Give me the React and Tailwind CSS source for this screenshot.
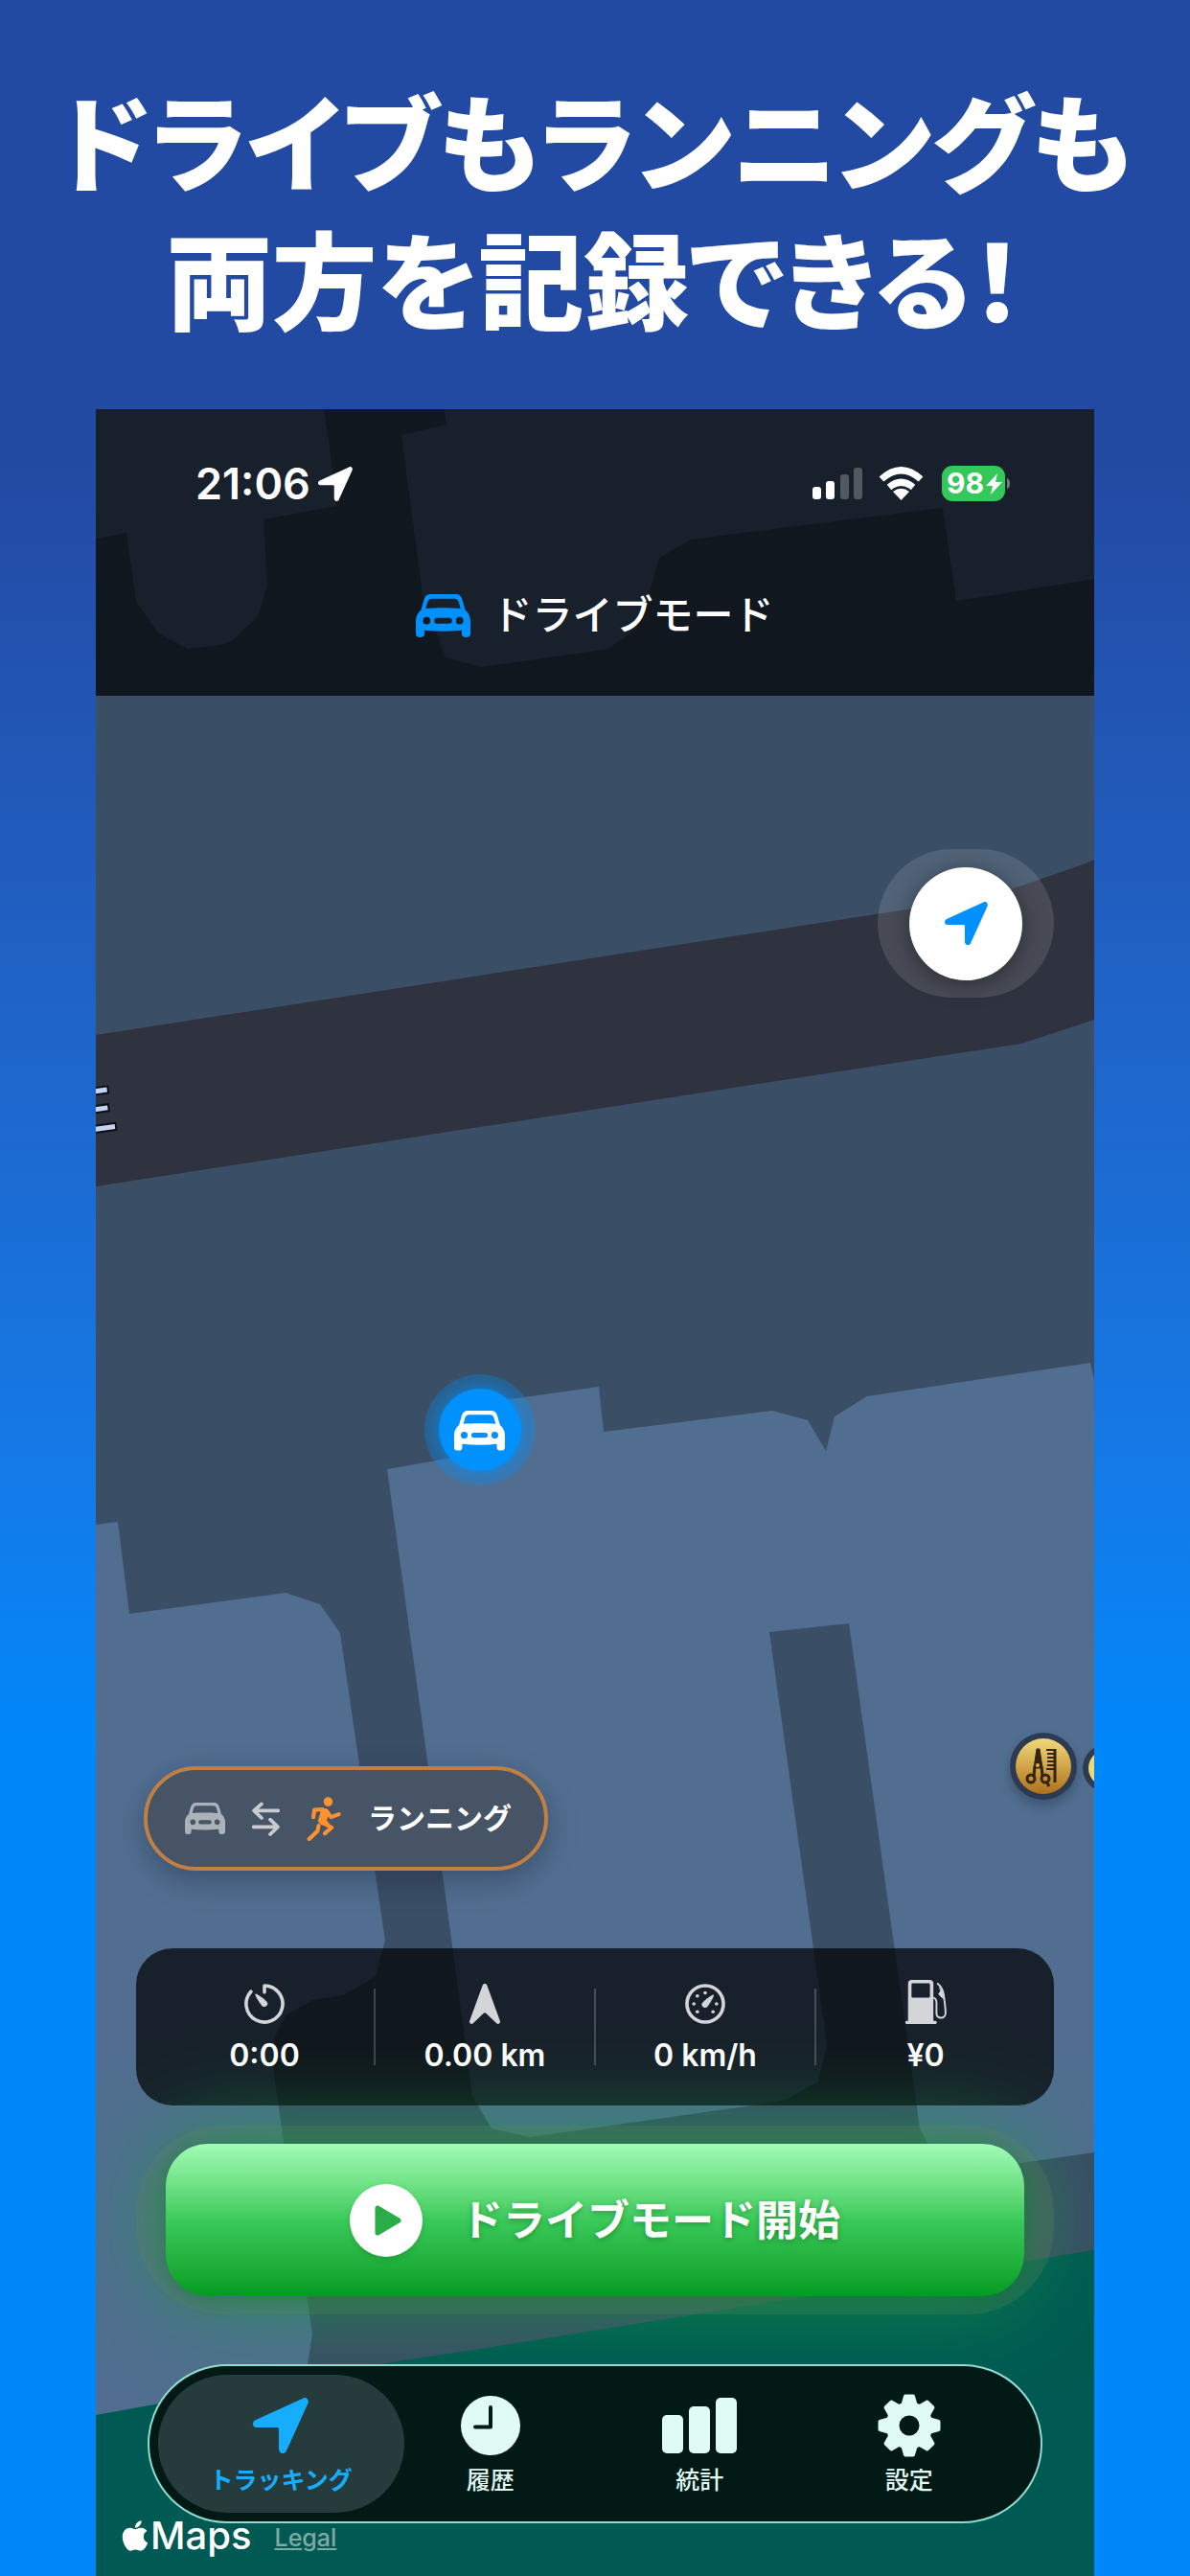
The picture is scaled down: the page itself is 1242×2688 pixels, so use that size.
import { useState } from "react";
import { FaApple } from "react-icons/fa";

const CAR_PATH =
  "M36 0H90C100 0 104 4 107 12L114 36C121 42 126 50 126 60V91C126 96 123 99 118 99H114C109 99 106 96 106 91V83C78 86 48 86 20 83V91C20 96 17 99 12 99H8C3 99 0 96 0 91V60C0 50 5 42 12 36L19 12C22 4 26 0 36 0ZM38 10C32 10 29 12 27 18L23 33C48 31 78 31 103 33L99 18C97 12 94 10 88 10ZM25 52.5A8.5 8.5 0 1 0 25 69.5A8.5 8.5 0 1 0 25 52.5ZM101 52.5A8.5 8.5 0 1 0 101 69.5A8.5 8.5 0 1 0 101 52.5ZM49 54.5A6.5 6.5 0 0 0 49 67.5H77A6.5 6.5 0 0 0 77 54.5Z";

function CarIcon({ className }) {
  return (
    <svg viewBox="0 0 126 99" className={className} fill="currentColor" aria-hidden="true">
      <path fillRule="evenodd" d={CAR_PATH} />
    </svg>
  );
}

function LocationIcon({ className }) {
  return (
    <svg viewBox="0 0 174 174" className={className} fill="currentColor" aria-hidden="true">
      <path d="M156 2L8 70C-4 76-2 93 11 93H76Q81 93 81 98V160C81 175 99 180 105 166L172 18C177 7 167-4 156 2Z" />
    </svg>
  );
}

function TimerIcon({ className }) {
  return (
    <svg viewBox="0 0 128 128" className={className} fill="none" stroke="currentColor" strokeWidth="11" strokeLinecap="round" aria-hidden="true">
      <path strokeLinejoin="round" d="M64 27V6A58 58 0 1 1 21 25" />
      <path fill="currentColor" stroke="none" d="M35 32C32 36 48 60 55 69C62 77 76 72 74 61C72 54 39 29 35 32Z" />
    </svg>
  );
}

function NorthIcon({ className }) {
  return (
    <svg viewBox="0 0 99 129" className={className} fill="currentColor" aria-hidden="true">
      <path d="M42 6C45-2 54-2 57 6L98 118C101 126 93 132 87 127L54 95Q49.500 91 45 95L12 127C6 132-2 126 1 118Z" />
    </svg>
  );
}

function SpeedIcon({ className }) {
  return (
    <svg viewBox="0 0 128 128" className={className} fill="currentColor" aria-hidden="true">
      <circle cx="64" cy="64" r="58" fill="none" stroke="currentColor" strokeWidth="11" />
      <circle cx="64" cy="29" r="5.500" />
      <circle cx="39" cy="39" r="5.500" />
      <circle cx="28" cy="64" r="5.500" />
      <circle cx="100" cy="64" r="5.500" />
      <circle cx="39" cy="89" r="5.500" />
      <circle cx="89" cy="89" r="5.500" />
      <path d="M91 35C94 39 79 62 72 72C65 80 51 75 53 64C55 57 87 32 91 35Z" />
    </svg>
  );
}

function FuelIcon({ className }) {
  return (
    <svg viewBox="0 0 133 141" className={className} fill="currentColor" aria-hidden="true">
      <path fillRule="evenodd" d="M21 0H78C86 0 90 4 90 12V131H97Q101 131 101 136T97 141H4Q0 141 0 136T4 131H9V12C9 4 13 0 21 0ZM24 11Q20 11 20 15V53Q20 57 24 57H75Q79 57 79 53V15Q79 11 75 11Z" />
      <path fill="none" stroke="currentColor" strokeWidth="6" strokeLinecap="round" d="M90 57C98 59 100 64 100 72V108C100 126 129 126 129 106C129 90 126 70 123 48C121 34 114 20 104 12" />
      <path d="M107 20L122 40L123 62L113 54L105 45L112 36Z" />
    </svg>
  );
}

function SwapIcon({ className }) {
  return (
    <svg viewBox="0 0 87 106" className={className} fill="none" stroke="currentColor" strokeWidth="11" strokeLinecap="round" strokeLinejoin="round" aria-hidden="true">
      <path d="M82 27H6M30 6L6 27L30 50M5 78H81M57 55L81 78L57 101" />
    </svg>
  );
}

function RunnerIcon({ className }) {
  return (
    <svg viewBox="0 0 104 135" className={className} fill="none" stroke="currentColor" strokeWidth="12" strokeLinecap="round" strokeLinejoin="round" aria-hidden="true">
      <circle cx="65" cy="15" r="14" fill="currentColor" stroke="none" />
      <path d="M20 62L23 40L48 38M62 46L74 62L98 53M46 78L76 94L55 112M36 88L33 104L7 129" />
      <path fill="currentColor" strokeWidth="8" d="M42 38L60 40L66 48L56 72L66 84L46 82L38 74L46 46Z" />
    </svg>
  );
}

function ClockIcon({ className }) {
  return (
    <svg viewBox="0 0 62 62" className={className} aria-hidden="true">
      <circle cx="31" cy="31" r="31" fill="currentColor" />
      <path d="M31 12V32.500H15" fill="none" stroke="#021916" strokeWidth="4" strokeLinecap="round" strokeLinejoin="round" />
    </svg>
  );
}

function BarsIcon({ className }) {
  return (
    <svg viewBox="0 0 78 58" className={className} fill="currentColor" aria-hidden="true">
      <rect x="0" y="18" width="22" height="40" rx="5" />
      <rect x="28" y="9" width="22" height="49" rx="5" />
      <rect x="56" y="0" width="22" height="58" rx="5" />
    </svg>
  );
}

function GearIcon({ className }) {
  return (
    <svg viewBox="-33 -33 66 66" className={className} fill="currentColor" stroke="currentColor" aria-hidden="true">
      <circle r="17.500" fill="none" strokeWidth="14" />
      {[0, 45, 90, 135, 180, 225, 270, 315].map(deg => (
        <path key={deg} transform={`rotate(${deg})`} strokeWidth="4" strokeLinejoin="round" d="M-4-30.500H4L7-20H-7Z" />
      ))}
    </svg>
  );
}

function StatusIcons() {
  return (
    <svg viewBox="0 0 206 38" className="w-[206px] h-[38px]" aria-hidden="true">
      <g fill="#fff">
        <rect x="0" y="22" width="9" height="13" rx="3" />
        <rect x="14" y="16" width="9" height="19" rx="3" />
        <rect x="29" y="9" width="9" height="26" rx="3" opacity=".25" />
        <rect x="43" y="2" width="9" height="33" rx="3" opacity=".25" />
        <path d="M92.500 36L84 27Q92.500 20.500 101 27Z" />
      </g>
      <g fill="none" stroke="#fff" strokeWidth="7">
        <path d="M80 22.500Q92.500 12 105 22.500" />
        <path d="M72 14Q92.500-4.500 113 14" />
      </g>
      <rect x="135" y="0" width="66" height="37" rx="11" fill="#34c759" />
      <path d="M203 13Q206 14 206 18.500T203 24Z" fill="#fff" opacity=".4" />
      <text x="140" y="29" fill="#fff" fontSize="30" fontWeight="700">98</text>
      <path d="M193 8L181 21H188L186 30L198 17H191Z" fill="#fff" />
    </svg>
  );
}

function MapCanvas() {
  return (
    <svg viewBox="100 427 1042 2261" preserveAspectRatio="xMidYMin slice" className="absolute inset-0 w-full h-full" aria-hidden="true">
      <defs>
        <linearGradient id="gold" x1="0" y1="0" x2="0" y2="1">
          <stop offset="0" stopColor="#f0da79" />
          <stop offset="1" stopColor="#b0701c" />
        </linearGradient>
        <filter id="soft" x="-50%" y="-50%" width="200%" height="200%">
          <feGaussianBlur stdDeviation="6" />
        </filter>
      </defs>
      <rect x="100" y="427" width="1042" height="2261" fill="#3a4e66" />

      {/* buildings */}
      <g fill="#516e90">
        <path d="M100 427H338L347 489L351 528L275 542L279 612L269 643L243 668L230 673L196 677L166 661L154 645L142 627L132 556L100 562Z" />
        <path d="M464 427L466 443L419 454L441 620L465 686L502 696L635 677L665 655L677 620L688 582L721 563L984 530L998 627L1142 604V427Z" />
        <path d="M100 1591L123 1588L135 1684L298 1662L334 1674L355 1704L369 1800L402 2025L392 2062L358 2082L326 2087L298 2103L286 2127L284 2150L296 2236L326 2435L316 2500L100 2540Z" />
        <path d="M404 1533L484 1519L476 1468L625 1447L630 1494L806 1472L843 1482L862 1514L871 1478L905 1457L1138 1422L1142 1440V2246L1066 2257L985 2268L960 2221L886 1694L803 1703L863 2134L854 2172L820 2191L779 2198L553 2230L513 2221L493 2187L441 1800Z" />
      </g>

      {/* road */}
      <path fill="#2f333f" d="M100 1080L985 943L1058 927L1133 901L1142 897V1064L1066 1089L850 1122L100 1238Z" />
      <text x="69" y="1183" transform="rotate(-8 69 1183)" fontSize="54" fontWeight="500" fill="#c5d5f0" stroke="#0b0d18" strokeWidth="4" paintOrder="stroke">王</text>

      {/* park */}
      <path fill="#005a53" d="M100 2520L402 2466L508 2450L837 2397L1142 2348V2688H100Z" />

      {/* current position */}
      <circle cx="501" cy="1492" r="58" fill="#0091ff" opacity=".3" />
      <circle cx="501" cy="1492" r="45" fill="#0091ff" opacity=".5" filter="url(#soft)" />
      <circle cx="501" cy="1492" r="43" fill="#0091ff" />
      <path transform="translate(474 1472) scale(.42)" fill="#fff" fillRule="evenodd" d={CAR_PATH} />

      {/* hair salon and the next pin */}
      <circle cx="1089" cy="1850" r="35" fill="#22304a" opacity=".4" filter="url(#soft)" />
      <circle cx="1089" cy="1843" r="35" fill="#2e3a52" />
      <circle cx="1089" cy="1843" r="29" fill="url(#gold)" />
      <g fill="none" stroke="#33250f" strokeWidth="3">
        <circle cx="1076" cy="1856" r="4" />
        <circle cx="1091" cy="1856" r="4" />
        <path d="M1079 1853L1080 1843M1087 1843L1088 1853M1092 1859L1095 1864" />
        <path fill="#33250f" strokeWidth="1" d="M1082 1825H1085L1088 1845H1079Z" />
        <path strokeWidth="2" d="M1092 1826H1101M1093 1830H1101M1093 1834H1101M1093 1838H1101M1093 1842H1101M1092 1846H1101" />
        <path d="M1101 1825V1860" />
      </g>
      <circle cx="1083" cy="1842" r="2" fill="#d9b354" />
      <circle cx="1155" cy="1845" r="25" fill="#2e3a52" />
      <circle cx="1155" cy="1845" r="19" fill="#ecd977" />
    </svg>
  );
}

const STATS = [
  { label: "0:00", Icon: TimerIcon, size: "w-[42px] h-[42px]" },
  { label: "0.00 km", Icon: NorthIcon, size: "w-[34px] h-[42px]" },
  { label: "0 km/h", Icon: SpeedIcon, size: "w-[42px] h-[42px]" },
  { label: "¥0", Icon: FuelIcon, size: "w-[45px] h-[46px]" },
];

const TABS = [
  { label: "トラッキング", Icon: LocationIcon, size: "w-[58px] h-[58px]" },
  { label: "履歴", Icon: ClockIcon, size: "w-[62px] h-[62px]" },
  { label: "統計", Icon: BarsIcon, size: "w-[78px] h-[58px]" },
  { label: "設定", Icon: GearIcon, size: "w-[66px] h-[66px]" },
];

export default function App() {
  const [tab, setTab] = useState(0);

  return (
    <div className="min-h-screen flex flex-col bg-linear-to-b from-[#234aa3] from-18% to-[#0088fb] to-68% text-white [font-family:Inter,'Noto_Sans_CJK_JP',sans-serif]">
      <h1 className="pt-[72px] h-[427px] text-center font-black text-[110px] leading-[144px] [font-family:'Noto_Sans_CJK_JP',sans-serif] [font-feature-settings:'palt']">
        ドライブもランニングも
        <br />
        両方を記録できる！
      </h1>

      <div className="relative flex-1 flex flex-col mx-[100px] overflow-hidden">
        <MapCanvas />

        <header className="relative h-[299px] bg-black/70">
          <div className="flex items-center justify-between pt-[54px] pl-[104px] pr-[88px]">
            <div className="flex items-center gap-2 text-[45px] leading-[48px] font-semibold">
              21:06
              <LocationIcon className="w-9 h-9" />
            </div>
            <StatusIcons />
          </div>
          <div className="flex items-center justify-center gap-[22px] mt-[83px]">
            <CarIcon className="w-[57px] h-[45px] text-[#0091ff]" />
            <h2 className="text-[42px] leading-[60px] font-medium">ドライブモード</h2>
          </div>
        </header>

        <main className="relative flex-1 flex flex-col px-[42px] pt-40">
          <div className="self-end flex items-center justify-center w-[184px] h-[155px] rounded-full bg-white/12">
            <button aria-label="現在地" className="flex items-center justify-center w-[118px] h-[118px] rounded-full bg-white text-[#0091ff] shadow-[0_4px_24px_rgba(0,0,0,0.4)]">
              <LocationIcon className="w-[45px] h-[45px]" />
            </button>
          </div>

          <button className="mt-auto ml-2 self-start flex items-center h-[109px] pl-[39px] pr-[34px] rounded-full border-4 border-[#c07f44] bg-[#465465] shadow-[0_10px_30px_rgba(20,30,50,0.35)]">
            <CarIcon className="w-[42px] h-[33px] text-[#abb2ba]" />
            <SwapIcon className="w-[29px] h-[36px] ml-7 text-[#c8ccd1]" />
            <RunnerIcon className="w-[36px] h-[46px] ml-7 text-[#ff9230]" />
            <span className="ml-7 text-[30px] font-bold">ランニング</span>
          </button>

          <div className="relative flex items-center h-[164px] mt-[81px] px-5 rounded-[38px] bg-black/70 divide-x-2 divide-white/20">
            {STATS.map(({ label, Icon, size }) => (
              <div key={label} className="flex-1 flex flex-col items-center justify-end h-20">
                <Icon className={`shrink-0 text-[#d3d5d8] ${size}`} />
                <span className="mt-[15px] -mb-2 text-[32px] leading-[36px] font-semibold">{label}</span>
              </div>
            ))}
          </div>

          <div className="relative mt-[21px] px-[31px] py-[19px] rounded-[90px] bg-[#808060]/25">
            <button className="w-full h-[159px] flex items-center justify-center gap-10 rounded-[44px] bg-linear-to-b from-[#a0fcb6] via-[#3aca5a] to-[#009c20] shadow-[0_0_100px_rgba(20,160,70,0.85),0_4px_20px_rgba(20,80,40,0.4)]">
              <svg viewBox="0 0 76 76" className="w-[76px] h-[76px] drop-shadow-md" aria-hidden="true">
                <circle cx="38" cy="38" r="38" fill="#fff" />
                <path d="M29 25V51L51 38Z" fill="#2aad47" stroke="#2aad47" strokeWidth="5" strokeLinejoin="round" />
              </svg>
              <span className="text-[44px] font-bold [text-shadow:0_2px_6px_rgba(0,80,20,0.4)]">ドライブモード開始</span>
            </button>
          </div>

          <nav className="relative flex mt-[52px] mx-3 h-[166px] px-[28px] py-[9px] rounded-full border-2 border-[#8fdcd0] bg-[#021916]">
            {TABS.map(({ label, Icon, size }, i) => (
              <button
                key={label}
                onClick={() => setTab(i)}
                className={`relative flex-1 flex flex-col items-center pt-2 ${tab === i ? "text-[#17adff] font-bold" : "text-[#e0faf5] font-medium"}`}
              >
                {tab === i && <span className="absolute inset-y-0 -inset-x-[19px] rounded-full bg-[#263b3b]" />}
                <span className="relative flex items-center h-[90px]">
                  <Icon className={size} />
                </span>
                <span className="relative -mt-[2px] text-[25px] leading-[28px]">{label}</span>
              </button>
            ))}
          </nav>

          <footer className="relative flex items-center h-[55px] pb-[30px] -ml-[17px]">
            <FaApple className="w-[32px] h-[36px]" />
            <span className="text-[40px] leading-[28px] font-medium">Maps</span>
            <a href="#legal" className="ml-6 pt-1 text-[25px] leading-[28px] font-medium text-[#7fa9a3] underline">Legal</a>
          </footer>
        </main>
      </div>
    </div>
  );
}
